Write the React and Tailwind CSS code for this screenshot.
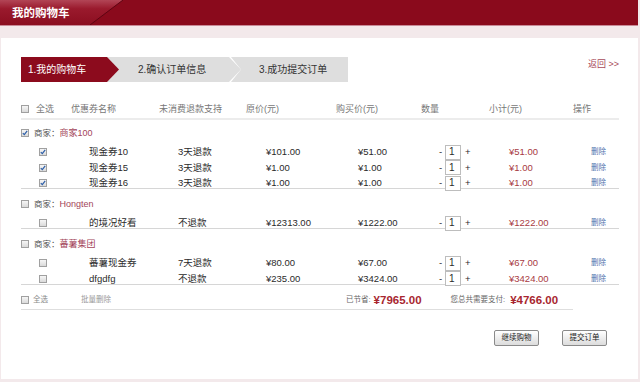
import React from "react";

const groups = [
  {
    name: "商家100",
    checked: true,
    items: [
      { name: "现金券10", refund: "3天退款", price: "101.00", buy: "51.00", sub: "51.00" },
      { name: "现金券15", refund: "3天退款", price: "1.00", buy: "1.00", sub: "1.00" },
      { name: "现金券16", refund: "3天退款", price: "1.00", buy: "1.00", sub: "1.00" },
    ],
  },
  {
    name: "Hongten",
    checked: false,
    items: [{ name: "的境况好看", refund: "不退款", price: "12313.00", buy: "1222.00", sub: "1222.00" }],
  },
  {
    name: "蕃薯集团",
    checked: false,
    items: [
      { name: "蕃薯现金券", refund: "7天退款", price: "80.00", buy: "67.00", sub: "67.00" },
      { name: "dfgdfg", refund: "不退款", price: "235.00", buy: "3424.00", sub: "3424.00" },
    ],
  },
];

function Box({ checked }) {
  return (
    <span className="inline-flex w-[8px] h-[8px] items-center justify-center border border-[#a0a0a0] bg-gradient-to-b from-[#f6f6f6] to-[#dadada]">
      {checked && (
        <svg width="6" height="6" viewBox="0 0 6 6">
          <path d="M0.8 3.2 L2.3 4.7 L5.2 0.9" fill="none" stroke="#2c5ea8" strokeWidth="1.2" />
        </svg>
      )}
    </span>
  );
}

function Row({ item, checked }) {
  return (
    <div className="grid grid-cols-[18px_50px_89px_88px_92px_81px_70px_82px_1fr] h-[15.5px] items-center text-[9.5px] leading-[12px] text-[#2a2a2a]">
      <span />
      <span className="flex items-center">
        <Box checked={checked} />
      </span>
      <span>{item.name}</span>
      <span>{item.refund}</span>
      <span>¥{item.price}</span>
      <span>¥{item.buy}</span>
      <span className="flex items-center">
        <span className="w-[6px]">-</span>
        <span className="w-[16px] h-[15px] border border-[#bdbdbd] bg-white pl-[3px] flex items-center text-[10px]">1</span>
        <span className="ml-[4px]">+</span>
      </span>
      <span className="text-[#a83a42]">¥{item.sub}</span>
      <span className="text-[7.5px] text-[#4f72ac]">删除</span>
    </div>
  );
}

export default function App() {
  return (
    <div
      className="w-[640px] h-[382px] overflow-hidden bg-[#f3e9eb]"
      style={{ fontFamily: '"Liberation Sans", "Noto Sans CJK SC", sans-serif' }}
    >
      {/* top bar */}
      <div className="relative h-[26px] w-[638px] bg-[#8a0a1c] border-b border-[#c98a97]">
        <svg className="absolute left-0 top-0" width="130" height="25" viewBox="0 0 130 25">
          <defs>
            <linearGradient id="tab" x1="0" y1="0" x2="0" y2="1">
              <stop offset="0" stopColor="#b24556" />
              <stop offset="0.35" stopColor="#9a1a2d" />
              <stop offset="1" stopColor="#8c0e20" />
            </linearGradient>
            <radialGradient id="glow" cx="0.5" cy="1" r="0.5">
              <stop offset="0" stopColor="#ffd6ea" stopOpacity="0.95" />
              <stop offset="1" stopColor="#e05a90" stopOpacity="0" />
            </radialGradient>
          </defs>
          <polygon points="0,0 123,0 90,25 0,25" fill="url(#tab)" />
          <line x1="123" y1="0" x2="90" y2="25" stroke="#5e0512" strokeWidth="1" />
          <ellipse cx="33" cy="25" rx="28" ry="5" fill="url(#glow)" />
        </svg>
        <div className="relative pl-[12px] pt-[6px] text-[11.5px] leading-[14px] font-bold text-white">
          我的购物车
        </div>
      </div>

      <div className="h-[12px]" />

      {/* main panel */}
      <div className="ml-px w-[637px] h-[341px] bg-white px-[20px] pt-[19px]">
        <div className="flex items-start justify-between w-[598px]">
          <div className="flex h-[25px] text-[10px] leading-[25px]">
            <div className="relative z-10 w-[98px] bg-[#8c0b1d] text-white pl-[7px] [clip-path:polygon(0_0,86px_0,98px_50%,86px_100%,0_100%)]">
              1.我的购物车
            </div>
            <div className="-ml-[12px] w-[134px] bg-[#dedede] text-[#333] pl-[31px] [clip-path:polygon(0_0,122px_0,134px_50%,122px_100%,0_100%)]">
              2.确认订单信息
            </div>
            <div className="-ml-[10px] w-[117px] bg-[#dedede] text-[#333] pl-[28px] [clip-path:polygon(0_0,100%_0,100%_100%,0_100%,10px_50%)]">
              3.成功提交订单
            </div>
          </div>
          <div className="pt-[1px] text-[9px] leading-[12px] text-[#a8495a]">返回 &gt;&gt;</div>
        </div>

        {/* table */}
        <div className="w-[598px] mt-[17px]">
          <div className="grid grid-cols-[15px_35px_88px_87px_90px_85px_68px_84px_1fr] h-[21px] items-center border-b-2 border-[#ececec] text-[9px] leading-[12px] text-[#777]">
            <span className="flex items-center">
              <Box />
            </span>
            <span>全选</span>
            <span>优惠券名称</span>
            <span>未消费退款支持</span>
            <span>原价(元)</span>
            <span>购买价(元)</span>
            <span>数量</span>
            <span>小计(元)</span>
            <span>操作</span>
          </div>

          {groups.map((g, i) => (
            <div key={g.name} className="border-b border-[#d6d6d6]">
              <div
                className={
                  i === 0
                    ? "pt-[4px] h-[21px] flex items-center gap-[5px] text-[9px] leading-[12px]"
                    : "pt-[6px] h-[23px] flex items-center gap-[5px] text-[9px] leading-[12px]"
                }
              >
                <Box checked={g.checked} />
                <span>
                  <span className="text-[8.5px] text-[#555]">商家：</span>
                  <span className="text-[#a3455a]">{g.name}</span>
                </span>
              </div>
              <div className="pt-[3.5px] -mb-[3px]">
                {g.items.map((it) => (
                  <Row key={it.name} item={it} checked={g.checked} />
                ))}
              </div>
            </div>
          ))}

          <div className="w-[552px] h-[25px] pt-[6px] flex items-center border-b border-[#dedede] text-[7.5px] leading-[10px]">
            <span className="w-[12px] flex items-center">
              <Box />
            </span>
            <span className="w-[48px] text-[#888]">全选</span>
            <span className="w-[265px] text-[#999]">批量删除</span>
            <span className="text-[#666]">已节省:</span>
            <span className="ml-[3px] text-[11.5px] font-bold text-[#a8262f]">¥7965.00</span>
            <span className="ml-[29px] text-[#666]">您总共需要支付:</span>
            <span className="ml-[5px] text-[11.5px] font-bold text-[#a8262f]">¥4766.00</span>
          </div>
        </div>

        <div className="w-[586px] mt-[20px] flex justify-end gap-[23px]">
          <button className="w-[45px] h-[16px] border border-[#8a8a8a] rounded-[2px] bg-gradient-to-b from-white to-[#dcdcdc] text-[7.5px] leading-[14px] text-[#222]">
            继续购物
          </button>
          <button className="w-[45px] h-[16px] border border-[#8a8a8a] rounded-[2px] bg-gradient-to-b from-white to-[#dcdcdc] text-[7.5px] leading-[14px] text-[#222]">
            提交订单
          </button>
        </div>
      </div>
    </div>
  );
}
